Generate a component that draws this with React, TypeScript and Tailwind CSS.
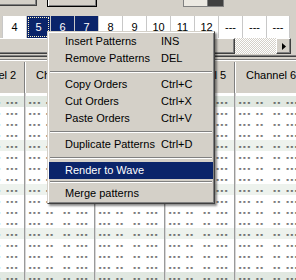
import React from "react";

const orders = ["4", "5", "6", "7", "8", "9", "10", "11", "12", "---", "---", "---"];

type MenuEntry = { label: string; key?: string; active?: boolean } | { sep: string };

const menu: MenuEntry[] = [
  { label: "Insert Patterns", key: "INS" },
  { label: "Remove Patterns", key: "DEL" },
  { sep: "h-[9px]" },
  { label: "Copy Orders", key: "Ctrl+C" },
  { label: "Cut Orders", key: "Ctrl+X" },
  { label: "Paste Orders", key: "Ctrl+V" },
  { sep: "h-[9px]" },
  { label: "Duplicate Patterns", key: "Ctrl+D" },
  { sep: "h-[9px]" },
  { label: "Render to Wave", active: true },
  { sep: "h-[6px]" },
  { label: "Merge patterns" },
];

const channels = [2, 3, 4, 5, 6];
const rows = Array.from({ length: 18 }, (_, i) => i);

function rowBg(i: number) {
  if (i === 1 || i === 17) return "bg-[#e1e8e1]";
  if (i % 4 === 1) return "bg-[#edf2ed]";
  return "bg-white";
}

const OrderList: React.FC = () => (
  <div className="flex h-[22px] pl-[2px]">
    {orders.map((o, idx) => {
      const sel = idx >= 1 && idx <= 3;
      return (
        <div
          key={idx}
          className={`relative w-[24px] shrink-0 border-l border-[#c8c8c8] ${
            idx === orders.length - 1 ? "border-r" : ""
          } ${sel ? "bg-[#0a246a] text-white" : "bg-white text-black"} text-center leading-[22px]`}
        >
          {o}
          {idx === 1 && (
            <span className="absolute inset-[1px] border border-dotted border-[#fff4c0]" />
          )}
        </div>
      );
    })}
  </div>
);

const ScrollBar: React.FC = () => (
  <div className="flex h-[16px]">
    <div className="w-[235px] shrink-0 bg-[#d4d0c8] border-t border-t-white border-r border-b border-[#404040] shadow-[inset_-1px_-1px_0_#808080]" />
    <div className="w-[41px] shrink-0 bg-[image:repeating-conic-gradient(#ffffff_0_25%,#d4d0c8_0_50%)] bg-[length:2px_2px]" />
    <div className="w-[15px] shrink-0 flex items-center justify-center bg-[#d4d0c8] border-t border-l border-t-white border-l-white border-r border-b border-r-[#404040] border-b-[#404040] shadow-[inset_-1px_-1px_0_#808080]">
      <svg width="4" height="7" viewBox="0 0 4 7">
        <polygon points="0,0 4,3.5 0,7" fill="#000" />
      </svg>
    </div>
  </div>
);

const ContextMenu: React.FC = () => (
  <div className="absolute left-[47px] top-[31px] w-[168px] p-[1px] bg-[#d4d0c8] border border-t-[#d4d0c8] border-l-[#d4d0c8] border-r-[#404040] border-b-[#404040] shadow-[inset_1px_1px_0_#fff,inset_-1px_-1px_0_#808080,2px_2px_2px_rgba(0,0,0,0.45)]">
    {menu.map((m, i) =>
      "sep" in m ? (
        <div key={i} className={`${m.sep} flex flex-col justify-center px-[1px]`}>
          <div className="h-px bg-[#808080]" />
          <div className="h-px bg-white" />
        </div>
      ) : (
        <div
          key={i}
          className={`flex h-[17px] leading-[17px] pl-[16px] ${
            m.active ? "bg-[#0a246a] text-white" : "text-black"
          }`}
        >
          <span className="w-[96px] shrink-0 whitespace-nowrap">{m.label}</span>
          {m.key && <span className="whitespace-nowrap">{m.key}</span>}
        </div>
      )
    )}
  </div>
);

export default function App() {
  return (
    <div className="relative w-[296px] h-[280px] overflow-hidden bg-[#d4d0c8] font-['Liberation_Sans',Arial,sans-serif] text-[11px] text-black">
      {/* toolbar remains */}
      <div className="flex items-start h-[16px]">
        <div className="w-[37px] h-[6px] shrink-0 bg-[#d4d0c8] border-r border-b border-[#404040] shadow-[inset_-1px_-1px_0_#808080]" />
        <div className="ml-[10px] w-[50px] h-[7px] shrink-0 bg-[#d4d0c8] border-l border-r border-b border-black shadow-[inset_1px_0_0_#fff,inset_-1px_-1px_0_#808080]" />
        <div className="ml-[86px] w-[41px] h-[7px] shrink-0 flex border border-t-0 border-[#808080]">
          <div className="flex-1 bg-[#ece9e2] border-r border-[#808080]" />
          <div className="w-[15px] bg-[#404040]" />
        </div>
      </div>

      <OrderList />
      <ScrollBar />

      {/* splitter */}
      <div className="h-[8px] flex flex-col">
        <div className="h-px" />
        <div className="h-px bg-[#808080]" />
        <div className="h-px bg-[#404040]" />
        <div className="h-[2px]" />
        <div className="h-px bg-[#808080]" />
        <div className="h-px bg-white" />
      </div>

      {/* channel headers */}
      <div className="flex h-[31px] -ml-[46px]">
        {channels.map((c) => (
          <div key={c} className="flex w-[70px] shrink-0">
            <div className="w-px bg-[#808080]" />
            <div className="w-px bg-white" />
            <span className="pl-[10px] pt-[7px] leading-[13px] whitespace-nowrap">Channel {c}</span>
          </div>
        ))}
      </div>

      {/* pattern rows */}
      <div className="h-[187px] overflow-hidden">
        <div className="-mt-[8px]">
          {rows.map((i) => (
            <div key={i} className={`flex h-[11px] -ml-[46px] ${rowBg(i)}`}>
              {channels.map((c) => (
                <div key={c} className="flex w-[70px] shrink-0">
                  <div className="w-px bg-[#9a9a9a]" />
                  <div className="w-px bg-[#d6d6d6]" />
                  <span className="pl-[2px] pt-[4px] font-['DejaVu_Sans_Mono',monospace] font-bold text-[7px] leading-[7px] tracking-[0.1px] whitespace-pre">
                    {"--- --  -- ---"}
                  </span>
                </div>
              ))}
            </div>
          ))}
        </div>
      </div>

      <ContextMenu />
    </div>
  );
}
